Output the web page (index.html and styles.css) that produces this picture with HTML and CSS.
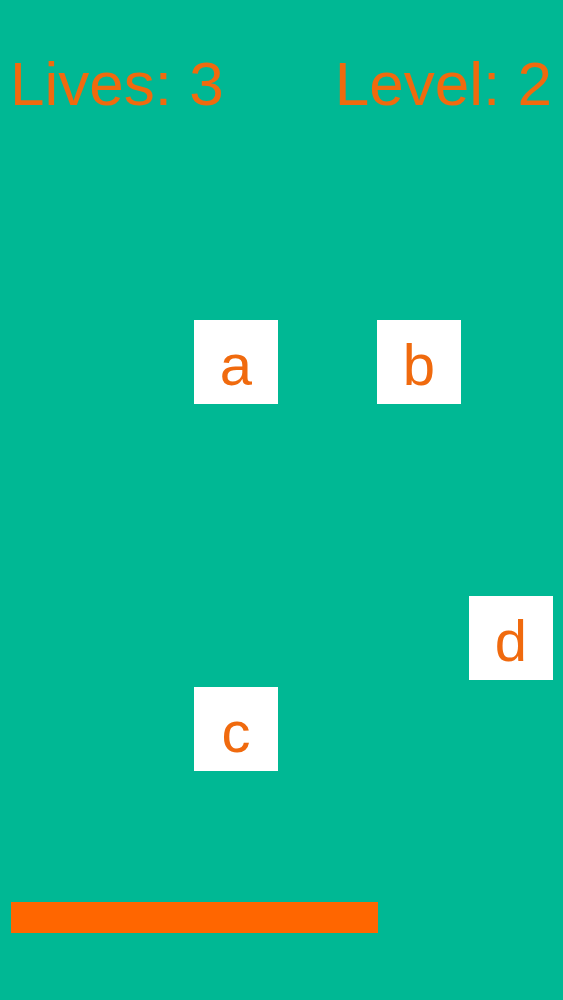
FILE: index.html
```html
<!DOCTYPE html>
<html>
<head>
<meta charset="utf-8">
<link rel="stylesheet" href="styles.css">
</head>
<body>
<div class="game">
  <div class="hud">
    <span class="hud-item">Lives: 3</span>
    <span class="hud-item">Level: 2</span>
  </div>
  <div class="tile tile-a">a</div>
  <div class="tile tile-b">b</div>
  <div class="tile tile-c">c</div>
  <div class="tile tile-d">d</div>
  <div class="paddle"></div>
</div>
</body>
</html>
```
FILE: styles.css
```css
html, body {
  margin: 0;
  padding: 0;
}
body {
  background: #00b894;
  font-family: "Liberation Sans", Arial, sans-serif;
}
.game {
  position: relative;
  width: 563px;
  height: 1000px;
  overflow: hidden;
}
.hud {
  display: flex;
  justify-content: space-between;
  padding: 48px 11px 0 10px;
  font-size: 62px;
  color: #f06a0e;
  line-height: normal;
}
.tile {
  position: absolute;
  box-sizing: border-box;
  width: 84px;
  height: 84px;
  padding-top: 4px;
  background: #ffffff;
  color: #f06a0e;
  font-size: 58px;
  display: flex;
  align-items: center;
  justify-content: center;
}
.tile-a { left: 194px; top: 320px; }
.tile-b { left: 377px; top: 320px; }
.tile-c { left: 194px; top: 687px; }
.tile-d { left: 469px; top: 596px; }
.paddle {
  position: absolute;
  left: 11px;
  top: 902px;
  width: 367px;
  height: 31px;
  background: #ff6600;
}
```
